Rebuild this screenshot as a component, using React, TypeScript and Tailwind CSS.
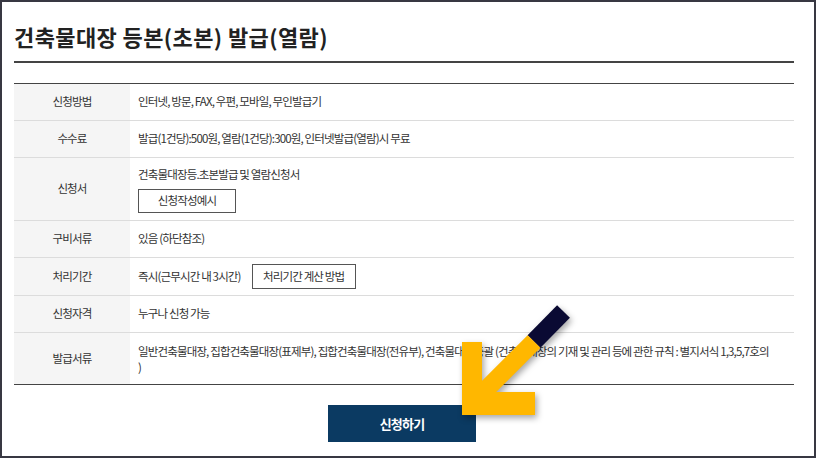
import React from "react";

type Row = {
  label: string;
  content: React.ReactNode;
  className: string;
  last?: boolean;
};

const body = "text-[11.5px] tracking-[-0.85px] text-[#333]";

const OutlineButton = ({ children, className }: { children: React.ReactNode; className: string }) => (
  <span
    className={`inline-flex items-center justify-center border border-[#555] bg-white text-[#333] ${className}`}
  >
    {children}
  </span>
);

const rows: Row[] = [
  { label: "신청방법", content: "인터넷, 방문, FAX, 우편, 모바일, 무인발급기", className: "h-[37px]" },
  {
    label: "수수료",
    content: "발급(1건당):500원, 열람(1건당):300원, 인터넷발급(열람)시 무료",
    className: "h-[37px]",
  },
  {
    label: "신청서",
    content: (
      <div className="flex flex-col items-start">
        <span className="leading-[18px]">건축물대장등.초본발급 및 열람신청서</span>
        <OutlineButton className="mt-[6px] h-[24px] w-[98px]">신청작성예시</OutlineButton>
      </div>
    ),
    className: "h-[63px]",
  },
  { label: "구비서류", content: "있음 (하단참조)", className: "h-[37px]" },
  {
    label: "처리기간",
    content: (
      <div className="flex items-center">
        <span>즉시(근무시간 내 3시간)</span>
        <OutlineButton className="ml-[11px] h-[25px] w-[104px]">처리기간 계산 방법</OutlineButton>
      </div>
    ),
    className: "h-[38px]",
  },
  { label: "신청자격", content: "누구나 신청 가능", className: "h-[37px]" },
  {
    label: "발급서류",
    content: (
      <p className="leading-[16px]">
        일반건축물대장, 집합건축물대장(표제부), 집합건축물대장(전유부), 건축물대장총괄 (건축물대장의 기재 및 관리 등에 관한
        규칙 : 별지서식 1,3,5,7호의
        <br />)
      </p>
    ),
    className: "h-[52px]",
    last: true,
  },
];

// yellow arrow pointing at the submit button
const Arrow = () => (
  <svg
    className="absolute left-[450px] top-[296px] drop-shadow-[2px_3px_3px_rgba(0,0,0,0.35)]"
    width="130"
    height="130"
    viewBox="0 0 130 130"
  >
    <line x1="111.5" y1="13.5" x2="82" y2="43.5" stroke="#0a0a33" strokeWidth="18" />
    <line x1="82" y1="43.5" x2="22" y2="103.5" stroke="#ffb700" strokeWidth="18" />
    <polygon points="10,44 30,44 30,94 83,94 83,117 10,117" fill="#ffb700" />
  </svg>
);

export default function App() {
  return (
    <div
      className="relative h-[458px] w-[816px] overflow-hidden border-2 border-[#383842] bg-white px-[12px]"
      style={{ fontFamily: '"Noto Sans CJK KR", "Noto Sans", sans-serif' }}
    >
      <h1 className="pt-[18px] text-[22px] font-bold leading-[33px] tracking-[0.4px] text-[#222]">
        건축물대장 등본(초본) 발급(열람)
      </h1>
      <div className="mt-[8px] w-[780px] border-t-2 border-[#444]" />

      <div className="mt-[20px] w-[780px] border-t border-[#444]">
        {rows.map((row) => (
          <div
            key={row.label}
            className={`flex border-b ${row.last ? "border-[#444]" : "border-[#dcdcdc]"} ${row.className}`}
          >
            <div className={`flex w-[116px] shrink-0 items-center justify-center bg-[#f5f5f5] ${body}`}>
              {row.label}
            </div>
            <div className={`flex flex-1 items-center pl-[8px] pr-[8px] ${body}`}>{row.content}</div>
          </div>
        ))}
      </div>

      <div className="mt-[20px] flex w-[780px] justify-center">
        <button className="ml-[-4px] h-[37px] w-[148px] bg-[#0b3a62] text-[13px] font-bold tracking-[-0.8px] text-white">
          신청하기
        </button>
      </div>

      <Arrow />
    </div>
  );
}
